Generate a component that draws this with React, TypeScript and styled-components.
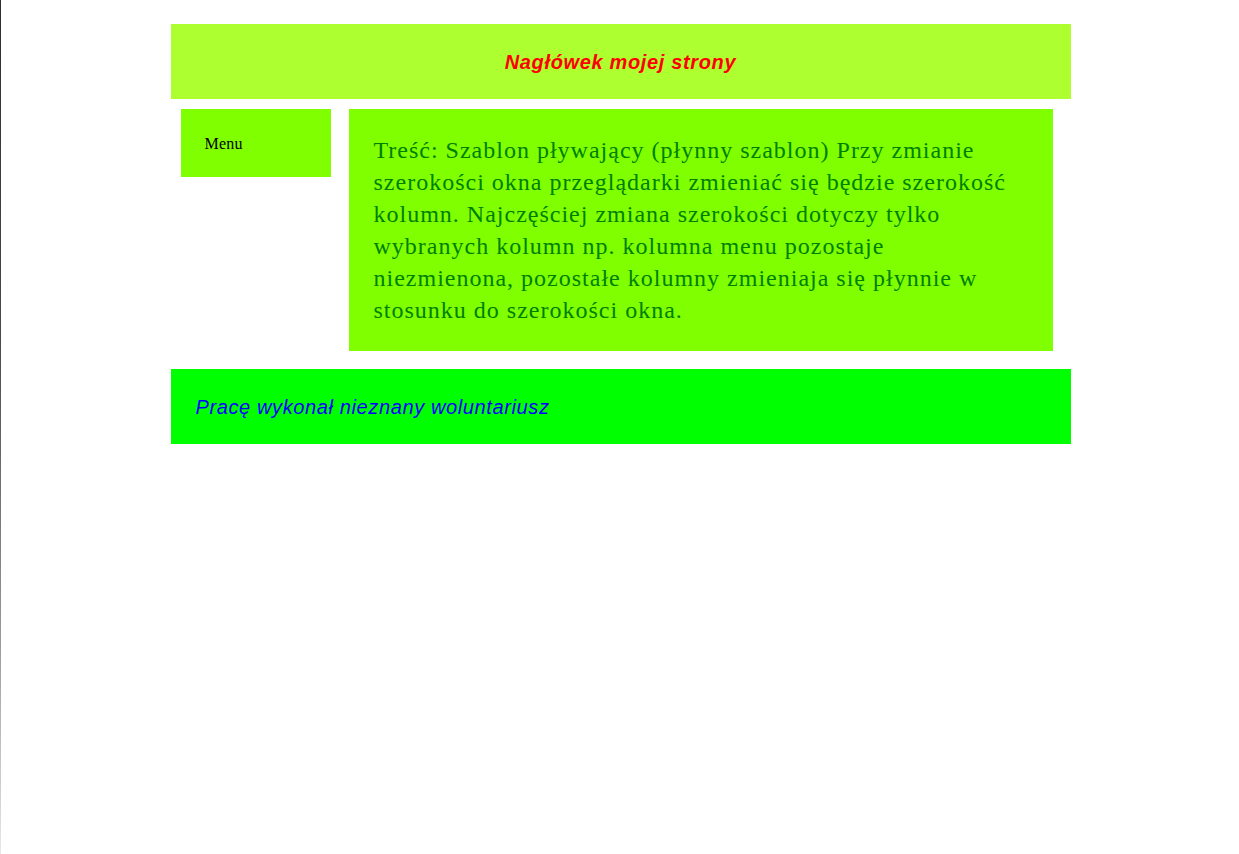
import React from "react";
import styled, { createGlobalStyle } from "styled-components";

const Global = createGlobalStyle`
  html {
    min-height: 100vh;
    border-left: 1px solid #333;
    border-image: linear-gradient(#2e2e2e, #4a4a4a 40%, #9a9a9a 75%, #e8e8e8) 1;
    background: #fff;
  }
  body {
    margin: 0;
    font-family: "Liberation Serif", "Times New Roman", serif;
  }
`;

const Page = styled.div`
  width: 900px;
  margin: 24px auto 0;
  padding-left: 1px;
  display: flex;
  flex-direction: column;
`;

const Header = styled.header`
  height: 75px;
  box-sizing: border-box;
  padding-top: 2px;
  background: #adff2f;
  display: flex;
  align-items: center;
  justify-content: center;
`;

const HeaderTitle = styled.h1`
  margin: 0;
  font-family: "Liberation Sans", Arial, sans-serif;
  font-size: 20px;
  letter-spacing: 0.65px;
  font-weight: bold;
  font-style: italic;
  color: #ff0000;
`;

const Columns = styled.div`
  display: flex;
  align-items: flex-start;
  margin-top: 10px;
  padding: 0 18px 0 10px;
  gap: 18px;
`;

const Menu = styled.nav`
  width: 150px;
  flex: none;
  box-sizing: border-box;
  padding: 26px 24px 24px;
  background: #7fff00;
  color: #000;
  font-size: 16px;
  letter-spacing: 0.2px;
  line-height: 18px;
`;

const Content = styled.main`
  flex: 1;
  box-sizing: border-box;
  padding: 25px 25px;
  background: #7fff00;
  color: #008000;
  font-size: 24px;
  letter-spacing: 1px;
  line-height: 32px;
`;

const Footer = styled.footer`
  margin-top: 18px;
  height: 75px;
  box-sizing: border-box;
  padding: 2px 25px 0;
  background: #00ff00;
  display: flex;
  align-items: center;
`;

const FooterText = styled.p`
  margin: 0;
  font-family: "Liberation Sans", Arial, sans-serif;
  font-size: 20px;
  letter-spacing: 0.62px;
  font-style: italic;
  color: #0000ff;
`;

export default function App() {
  return (
    <>
      <Global />
      <Page>
        <Header>
          <HeaderTitle>Nagłówek mojej strony</HeaderTitle>
        </Header>
        <Columns>
          <Menu>Menu</Menu>
          <Content>
            Treść: Szablon pływający (płynny szablon) Przy zmianie szerokości okna
            przeglądarki zmieniać się będzie szerokość kolumn. Najczęściej zmiana
            szerokości dotyczy tylko wybranych kolumn np. kolumna menu pozostaje
            niezmienona, pozostałe kolumny zmieniaja się płynnie w stosunku do
            szerokości okna.
          </Content>
        </Columns>
        <Footer>
          <FooterText>Pracę wykonał nieznany woluntariusz</FooterText>
        </Footer>
      </Page>
    </>
  );
}
